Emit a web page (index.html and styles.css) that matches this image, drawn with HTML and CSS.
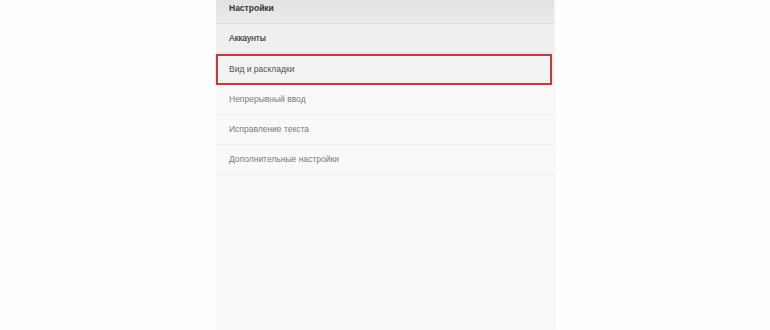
FILE: index.html
```html
<html>
<head>
	<meta charset="utf-8">
	<title>Настройки</title>
	<link rel="stylesheet" href="styles.css">
</head>
<body>
	<div class="panel">
		<div class="head">Настройки</div>
		<div class="row dark">Аккаунты</div>
		<div class="row dark marked">Вид и раскладки</div>
		<div class="row">Непрерывный ввод</div>
		<div class="row">Исправление текста</div>
		<div class="row">Дополнительные настройки</div>
	</div>
</body>
</html>
```
FILE: styles.css
```css
body{
	margin:0;
	background:#fefefe;
	font-family:"Liberation Sans", Arial, sans-serif;
	font-size:8.5px;
}
.panel{
	width:338px;
	height:330px;
	margin-left:216px;
	background:#f9f9f9;
	box-shadow:1px 0 2px #f0f0f0;
}
.head{
	height:23px;
	padding-left:13px;
	line-height:17px;
	font-weight:bold;
	color:#333;
	background:linear-gradient(#e2e2e2,#ebebeb);
	border-bottom:1px solid #dedede;
}
.row{
	height:29px;
	line-height:29px;
	padding-left:13px;
	color:#7a7a7a;
	border-bottom:1px solid #f1f1f1;
}
.dark{
	color:#3c3c3c;
	background:#efefef;
	text-shadow:0 0 0.3px #888;
}
.marked{
	height:27px;
	line-height:27px;
	margin-right:2px;
	padding-left:11px;
	color:#505050;
	border:2px solid #c23a42;
	background:#f2f2f2;
	box-shadow:0 0 2px #f3b5b8;
	text-shadow:none;
}
```
